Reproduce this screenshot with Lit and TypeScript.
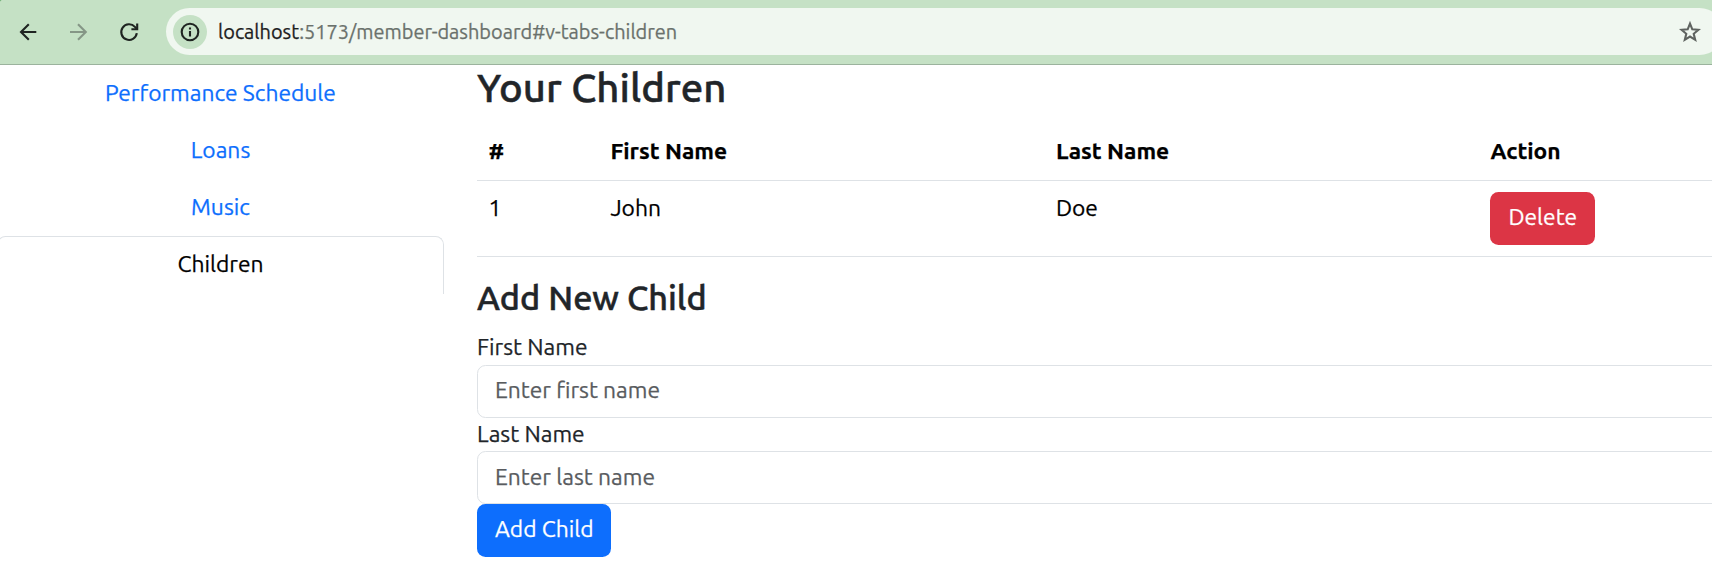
import { LitElement, html, css } from "lit";
import { customElement, state } from "lit/decorators.js";
import { classMap } from "lit/directives/class-map.js";

@customElement("browser-bar")
class BrowserBar extends LitElement {
  static styles = css`
    :host {
      display: flex;
      align-items: center;
      box-sizing: border-box;
      height: 65px;
      padding: 0 0 1px 16px;
      background: radial-gradient(circle at 11px 11px, #c5e1c5 14px, #6fae74 15px) 0 0 / 11px 11px no-repeat #c5e1c5;
      border-bottom: 1px solid #9bb39d;
      overflow: hidden;
    }
    .icon { flex: none; width: 24px; height: 24px; fill: none; stroke: #1f2421; stroke-width: 2.1; }
    .forward { margin-left: 26px; stroke: #859686; }
    .reload { margin-left: 27px; }
    .address {
      display: flex;
      align-items: center;
      flex: none;
      box-sizing: border-box;
      width: 1557px;
      height: 47px;
      margin-left: 25px;
      padding: 0 21px 0 7px;
      border-radius: 24px;
      background: #f0f7f0;
    }
    .info {
      display: flex;
      align-items: center;
      justify-content: center;
      width: 34px;
      height: 34px;
      border-radius: 50%;
      background: #c5e1c5;
    }
    .url {
      flex: 1;
      margin-left: 11px;
      padding-top: 1px;
      font: 19.95px/24px Ubuntu, "Noto Sans", sans-serif;
      -webkit-text-stroke: 0.25px;
      color: #6a716c;
    }
    .host { color: #1d211e; }
    .star { stroke: #5f6360; }
  `;

  render() {
    return html`
      <svg class="icon" viewBox="0 0 24 24"><path d="M20.3 12H5M12.8 4.2 5 12l7.8 7.8" /></svg>
      <svg class="icon forward" viewBox="0 0 24 24"><path d="M4 12h15.3M12 4.2l7.8 7.8-7.8 7.8" /></svg>
      <svg class="icon reload" viewBox="0 0 24 24">
        <path d="M19.8 13.2a7.8 7.8 0 1 1-1.9-6.3l1.8 2" /><path d="M20.2 3.6v5.6h-5.8" />
      </svg>
      <div class="address">
        <span class="info">
          <svg class="icon" viewBox="0 0 24 24">
            <circle cx="12" cy="12" r="8.3" /><path d="M12 11v5.5M12 7.4v2.2" />
          </svg>
        </span>
        <span class="url"><span class="host">localhost</span>:5173/member-dashboard#v-tabs-children</span>
        <svg class="icon star" viewBox="0 0 24 24">
          <path d="M12 3.6l2.3 5.7 6.1.5-4.7 4 1.5 6L12 16.6l-5.2 3.2 1.5-6-4.7-4 6.1-.5z" />
        </svg>
      </div>
    `;
  }
}

@customElement("app-root")
class AppRoot extends LitElement {
  static styles = css`
    :host {
      display: block;
      height: 581px;
      overflow: hidden;
      background: #fff;
      color: #212529;
      font: 22.8px/34.2px Ubuntu, "Noto Sans", sans-serif;
      -webkit-text-stroke: 0.25px;
    }
    .page { display: grid; grid-template-columns: 444px 1fr; column-gap: 33px; }
    .tabs { display: flex; flex-direction: column; margin-left: -3px; }
    .tab {
      box-sizing: border-box;
      height: 57px;
      padding-top: 10.4px;
      border: 1px solid transparent;
      border-bottom: 0;
      border-radius: 8.5px 8.5px 0 0;
      text-align: center;
      color: #0d6efd;
    }
    .active { height: 58px; border-color: #dee2e6; color: #000; }
    h3, h4 { margin: 0; font-weight: 500; -webkit-text-stroke: 0.5px; }
    h3 { height: 59px; font-size: 40.1px; line-height: 45px; letter-spacing: 0.07px; }
    h4 { height: 53px; padding-top: 20px; font-size: 34.2px; line-height: 41px; }
    .row {
      display: grid;
      grid-template-columns: 122px 445.5px 434.5px 1fr;
      box-sizing: border-box;
      height: 76px;
      padding: 10px 0 0 11.4px;
      border-bottom: 1px solid #dee2e6;
      color: #000;
    }
    .head { height: 57px; font-weight: 700; }
    button {
      box-sizing: border-box;
      height: 53px;
      padding: 0 17.6px 2px 18px;
      border: 0;
      border-radius: 8.5px;
      font: inherit;
      color: #fff;
      justify-self: start;
    }
    .delete { margin-top: 1px; background: #dc3545; }
    .add { display: block; background: #0d6efd; }
    label { display: block; height: 35px; }
    input + label { height: 34px; margin-top: -1px; }
    input {
      display: block;
      box-sizing: border-box;
      width: 1260px;
      height: 53px;
      padding: 0 17px 2px;
      border: 1px solid #dee2e6;
      border-radius: 8.5px;
      background: #fff;
      font: inherit;
    }
    label:first-of-type + input { padding-bottom: 4px; }
    input::placeholder { color: #595c5f; opacity: 1; }
  `;

  @state() private active = "Children";
  @state() private members = [{ first: "John", last: "Doe" }];

  render() {
    return html`
      <browser-bar></browser-bar>
      <div class="page">
        <nav class="tabs">
          ${["Performance Schedule", "Loans", "Music", "Children"].map(
            (name) => html`<a class=${classMap({ tab: true, active: name === this.active })}>${name}</a>`
          )}
        </nav>
        <main>
          <h3>Your Children</h3>
          <div class="row head">
            <span>#</span><span>First Name</span><span>Last Name</span><span>Action</span>
          </div>
          ${this.members.map(
            (child, i) => html`
              <div class="row">
                <span>${i + 1}</span><span>${child.first}</span><span>${child.last}</span>
                <button class="delete">Delete</button>
              </div>
            `
          )}
          <h4>Add New Child</h4>
          <label>First Name</label>
          <input placeholder="Enter first name" />
          <label>Last Name</label>
          <input placeholder="Enter last name" />
          <button class="add">Add Child</button>
        </main>
      </div>
    `;
  }
}
